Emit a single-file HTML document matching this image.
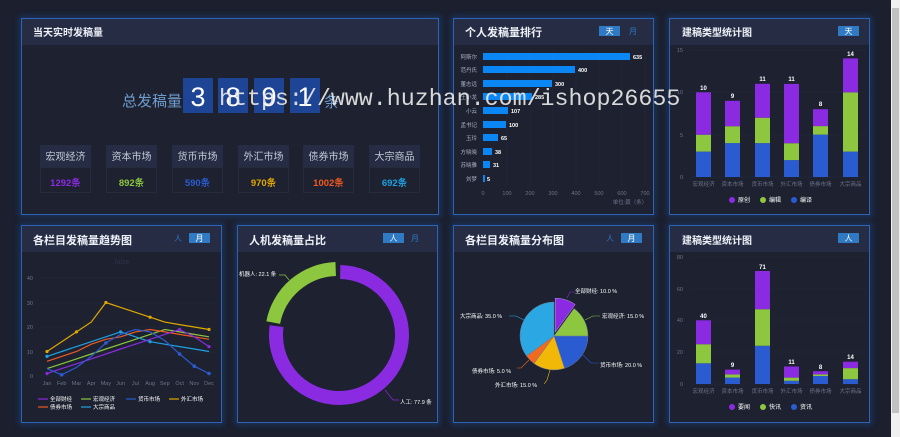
<!DOCTYPE html>
<html><head><meta charset="utf-8"><style>
html,body{margin:0;padding:0;background:#1b1f2e;width:900px;height:437px;overflow:hidden}
svg{display:block}
text{font-family:"Liberation Sans","Noto Sans CJK SC",sans-serif}
</style></head><body>
<svg width="900" height="437" viewBox="0 0 900 437" xmlns="http://www.w3.org/2000/svg">
<defs><filter id="g" x="-10%" y="-10%" width="120%" height="120%"><feGaussianBlur stdDeviation="3"/></filter></defs>
<rect width="900" height="437" fill="#1b1f2e"/>
<rect x="891" y="0" width="9" height="437" fill="#f0f0f0"/>
<rect x="892" y="8" width="7" height="405" fill="#c1c1c1"/>
<g fill="none" stroke="#1f4f9a" stroke-width="4" opacity="0.5" filter="url(#g)">
<rect x="21" y="18" width="418" height="197"/><rect x="453" y="18" width="201" height="197"/><rect x="669" y="18" width="201" height="197"/>
<rect x="21" y="225" width="201" height="198"/><rect x="237" y="225" width="201" height="198"/><rect x="453" y="225" width="201" height="198"/><rect x="669" y="225" width="201" height="198"/>
</g>
<g fill="#1d2130">
<rect x="21" y="18" width="418" height="197"/><rect x="453" y="18" width="201" height="197"/><rect x="669" y="18" width="201" height="197"/>
<rect x="21" y="225" width="201" height="198"/><rect x="237" y="225" width="201" height="198"/><rect x="453" y="225" width="201" height="198"/><rect x="669" y="225" width="201" height="198"/>
</g>
<g fill="#252c44">
<rect x="21" y="18" width="418" height="27"/><rect x="453" y="18" width="201" height="27"/><rect x="669" y="18" width="201" height="27"/>
<rect x="21" y="225" width="201" height="27"/><rect x="237" y="225" width="201" height="27"/><rect x="453" y="225" width="201" height="27"/><rect x="669" y="225" width="201" height="27"/>
</g>
<g fill="none" stroke="#2c63b8" stroke-width="1">
<rect x="21.5" y="18.5" width="417" height="196"/><rect x="453.5" y="18.5" width="200" height="196"/><rect x="669.5" y="18.5" width="200" height="196"/>
<rect x="21.5" y="225.5" width="200" height="197"/><rect x="237.5" y="225.5" width="200" height="197"/><rect x="453.5" y="225.5" width="200" height="197"/><rect x="669.5" y="225.5" width="200" height="197"/>
</g>
<g fill="#eef1f7" font-weight="bold">
<text x="33" y="36" font-size="10">当天实时发稿量</text>
<text x="465" y="36" font-size="11">个人发稿量排行</text>
<text x="682" y="36" font-size="10">建稿类型统计图</text>
<text x="33" y="244" font-size="11">各栏目发稿量趋势图</text>
<text x="249" y="244" font-size="11">人机发稿量占比</text>
<text x="465" y="244" font-size="11">各栏目发稿量分布图</text>
<text x="682" y="244" font-size="10">建稿类型统计图</text>
</g>
<g fill="#2f7ac2"><rect x="599" y="26" width="21" height="10"/><rect x="838" y="26" width="21" height="10"/><rect x="189" y="233" width="21" height="10"/><rect x="383" y="233" width="21" height="10"/><rect x="621" y="233" width="21" height="10"/><rect x="838" y="233" width="21" height="10"/></g>
<g font-size="8" fill="#fff" text-anchor="middle">
<text x="609.5" y="34">天</text><text x="848.5" y="34">天</text><text x="199.5" y="241">月</text><text x="393.5" y="241">人</text><text x="631.5" y="241">月</text><text x="848.5" y="241">人</text>
</g>
<g font-size="8" fill="#2f7ac2" text-anchor="middle"><text x="633" y="34">月</text><text x="178" y="241">人</text><text x="415" y="241">月</text><text x="610" y="241">人</text></g>

<text x="122" y="106" font-size="15" fill="#6f9ccc">总发稿量</text>
<g fill="#1e4496"><rect x="183" y="78" width="30" height="35"/><rect x="218" y="78" width="30" height="35"/><rect x="254" y="78" width="30" height="35"/><rect x="290" y="78" width="30" height="35"/></g>
<g fill="#fff" font-size="27" text-anchor="middle"><text x="198" y="106">3</text><text x="233" y="106">8</text><text x="269" y="106">9</text><text x="305" y="106">1</text></g>
<text x="324" y="107" font-size="15" fill="#6f9ccc">条</text>
<g>
<rect x="40" y="145" width="51" height="22" fill="#252c44"/><rect x="40.5" y="167.5" width="50" height="25" fill="#1d2130" stroke="#262c3e"/>
<rect x="106" y="145" width="51" height="22" fill="#252c44"/><rect x="106.5" y="167.5" width="50" height="25" fill="#1d2130" stroke="#262c3e"/>
<rect x="172" y="145" width="51" height="22" fill="#252c44"/><rect x="172.5" y="167.5" width="50" height="25" fill="#1d2130" stroke="#262c3e"/>
<rect x="238" y="145" width="51" height="22" fill="#252c44"/><rect x="238.5" y="167.5" width="50" height="25" fill="#1d2130" stroke="#262c3e"/>
<rect x="303" y="145" width="51" height="22" fill="#252c44"/><rect x="303.5" y="167.5" width="50" height="25" fill="#1d2130" stroke="#262c3e"/>
<rect x="369" y="145" width="51" height="22" fill="#252c44"/><rect x="369.5" y="167.5" width="50" height="25" fill="#1d2130" stroke="#262c3e"/>
</g>
<g font-size="10" fill="#c3cad8" text-anchor="middle"><text x="65.5" y="160">宏观经济</text><text x="131.5" y="160">资本市场</text><text x="197.5" y="160">货币市场</text><text x="263.5" y="160">外汇市场</text><text x="328.5" y="160">债券市场</text><text x="394.5" y="160">大宗商品</text></g>
<g font-size="9.5" font-weight="bold" text-anchor="middle">
<text x="65.5" y="186" fill="#8a2be2">1292条</text><text x="131.5" y="186" fill="#8dc63f">892条</text><text x="197.5" y="186" fill="#2b5bd0">590条</text><text x="263.5" y="186" fill="#e0a800">970条</text><text x="328.5" y="186" fill="#f05a22">1002条</text><text x="394.5" y="186" fill="#1fa0e0">692条</text>
</g>

<g stroke="#262c3e" stroke-width="0.6"><line x1="507" y1="50" x2="507" y2="185"/><line x1="530" y1="50" x2="530" y2="185"/><line x1="553" y1="50" x2="553" y2="185"/><line x1="576" y1="50" x2="576" y2="185"/><line x1="599" y1="50" x2="599" y2="185"/><line x1="622" y1="50" x2="622" y2="185"/><line x1="645" y1="50" x2="645" y2="185"/></g>
<g fill="#0a86f5">
<rect x="483" y="53" width="147" height="7"/><rect x="483" y="66" width="92" height="7"/><rect x="483" y="80" width="69" height="7"/><rect x="483" y="93" width="49" height="7"/><rect x="483" y="107" width="25" height="7"/><rect x="483" y="121" width="23" height="7"/><rect x="483" y="134" width="15" height="7"/><rect x="483" y="148" width="9" height="7"/><rect x="483" y="161" width="7" height="7"/><rect x="483" y="175" width="2" height="7"/>
</g>
<g font-size="5.5" fill="#aab3c5" text-anchor="end"><text x="477" y="59">阿斯尔</text><text x="477" y="72">范丹氏</text><text x="477" y="86">董志远</text><text x="477" y="99">王小龙</text><text x="477" y="113">小云</text><text x="477" y="127">孟书记</text><text x="477" y="140">玉玲</text><text x="477" y="154">方晓晓</text><text x="477" y="167">苏晓雅</text><text x="477" y="181">刘梦</text></g>
<g font-size="5.5" fill="#fff" font-weight="bold"><text x="633" y="59">635</text><text x="578" y="72">400</text><text x="555" y="86">300</text><text x="535" y="99">285</text><text x="511" y="113">107</text><text x="509" y="127">100</text><text x="501" y="140">65</text><text x="495" y="154">38</text><text x="493" y="167">31</text><text x="487" y="181">5</text></g>
<g font-size="5.5" fill="#6c7488" text-anchor="middle"><text x="483" y="195">0</text><text x="507" y="195">100</text><text x="530" y="195">200</text><text x="553" y="195">300</text><text x="576" y="195">400</text><text x="599" y="195">500</text><text x="622" y="195">600</text><text x="645" y="195">700</text></g>
<text x="630" y="204" font-size="5.5" fill="#6c7488" text-anchor="middle">单位:篇（条）</text>

<g stroke="#262c3e" stroke-width="0.6"><line x1="690" y1="177" x2="866" y2="177"/><line x1="690" y1="135" x2="866" y2="135"/><line x1="690" y1="92" x2="866" y2="92"/><line x1="690" y1="50" x2="866" y2="50"/></g>
<g font-size="5.5" fill="#6c7488" text-anchor="end"><text x="683" y="179">0</text><text x="683" y="137">5</text><text x="683" y="94">10</text><text x="683" y="52">15</text></g>
<g fill="#2b5bd0"><rect x="696" y="151.6" width="15" height="25.4"/><rect x="725" y="143.1" width="15" height="33.9"/><rect x="755" y="143.1" width="15" height="33.9"/><rect x="784" y="160.1" width="15" height="16.9"/><rect x="813" y="134.6" width="15" height="42.4"/><rect x="843" y="151.6" width="15" height="25.4"/></g>
<g fill="#8dc63f"><rect x="696" y="134.7" width="15" height="16.9"/><rect x="725" y="126.2" width="15" height="16.9"/><rect x="755" y="117.7" width="15" height="25.4"/><rect x="784" y="143.2" width="15" height="16.9"/><rect x="813" y="126.1" width="15" height="8.5"/><rect x="843" y="92.3" width="15" height="59.3"/></g>
<g fill="#8a2be2"><rect x="696" y="92.3" width="15" height="42.4"/><rect x="725" y="100.8" width="15" height="25.4"/><rect x="755" y="83.8" width="15" height="33.9"/><rect x="784" y="83.9" width="15" height="59.3"/><rect x="813" y="109.2" width="15" height="16.9"/><rect x="843" y="58.4" width="15" height="33.9"/></g>
<g font-size="6" fill="#fff" font-weight="bold" text-anchor="middle"><text x="703.5" y="90">10</text><text x="732.5" y="98">9</text><text x="762.5" y="81">11</text><text x="791.5" y="81">11</text><text x="820.5" y="106">8</text><text x="850.5" y="56">14</text></g>
<g font-size="5.5" fill="#6c7488" text-anchor="middle"><text x="703.5" y="186">宏观经济</text><text x="732.5" y="186">资本市场</text><text x="762.5" y="186">货币市场</text><text x="791.5" y="186">外汇市场</text><text x="820.5" y="186">债券市场</text><text x="850.5" y="186">大宗商品</text></g>
<circle cx="732" cy="200" r="3" fill="#8a2be2"/><circle cx="763" cy="200" r="3" fill="#8dc63f"/><circle cx="794" cy="200" r="3" fill="#2b5bd0"/>
<g font-size="6" fill="#fff"><text x="738" y="202">原创</text><text x="769" y="202">编辑</text><text x="800" y="202">编译</text></g>

<text x="122" y="264" font-size="7" fill="#2e3446" text-anchor="middle">false</text>
<g stroke="#262c3e" stroke-width="0.6"><line x1="40" y1="376" x2="216" y2="376"/><line x1="40" y1="352" x2="216" y2="352"/><line x1="40" y1="327" x2="216" y2="327"/><line x1="40" y1="303" x2="216" y2="303"/><line x1="40" y1="278" x2="216" y2="278"/></g>
<g font-size="5.5" fill="#6c7488" text-anchor="end"><text x="33" y="378">0</text><text x="33" y="354">10</text><text x="33" y="329">20</text><text x="33" y="305">30</text><text x="33" y="280">40</text></g>
<g font-size="5.5" fill="#6c7488" text-anchor="middle"><text x="47" y="385">Jan</text><text x="61.7" y="385">Feb</text><text x="76.5" y="385">Mar</text><text x="91.2" y="385">Apr</text><text x="105.9" y="385">May</text><text x="120.6" y="385">Jun</text><text x="135.4" y="385">Jul</text><text x="150.1" y="385">Aug</text><text x="164.8" y="385">Sep</text><text x="179.6" y="385">Oct</text><text x="194.3" y="385">Nov</text><text x="209" y="385">Dec</text></g>
<g fill="none" stroke-width="1.2">
<polyline stroke="#e0a800" points="47,351.5 61.7,341.7 76.5,331.9 91.2,322.1 105.9,302.5 120.6,307.4 135.4,312.3 150.1,317.2 164.8,322.1 179.6,324.6 194.3,327 209,329.5"/>
<polyline stroke="#8dc63f" points="47,368.6 61.7,363.8 76.5,358.9 91.2,354 105.9,349 120.6,344.2 135.4,339.3 150.1,334.4 164.8,329.5 179.6,331.9 194.3,334.4 209,336.8"/>
<polyline stroke="#f05a22" points="47,361.3 61.7,356.4 76.5,351.5 91.2,344.2 105.9,339.3 120.6,336.8 135.4,331.9 150.1,329.5 164.8,331.9 179.6,334.4 194.3,336.8 209,339.3"/>
<polyline stroke="#1fa0e0" points="47,356.4 61.7,351.5 76.5,346.6 91.2,341.7 105.9,336.8 120.6,331.9 135.4,336.8 150.1,341.7 164.8,344.2 179.6,346.6 194.3,349 209,351.5"/>
<polyline stroke="#8a2be2" points="47,373.5 61.7,368.6 76.5,363.8 91.2,358.9 105.9,354 120.6,349 135.4,344.2 150.1,339.3 164.8,334.4 179.6,329.5 194.3,336.8 209,346.6"/>
<polyline stroke="#2b5bd0" points="47,368.6 61.7,374.8 76.5,367.4 91.2,356.4 105.9,342.9 120.6,334.4 135.4,329.5 150.1,331.9 164.8,340.5 179.6,354 194.3,366.2 209,373.5"/>
</g>
<g fill="#e0a800"><circle cx="47" cy="351.5" r="1.6"/><circle cx="105.9" cy="302.5" r="1.6"/><circle cx="209" cy="329.5" r="1.6"/><circle cx="76.5" cy="331.9" r="1.6"/><circle cx="150.1" cy="317.2" r="1.6"/></g>
<g fill="#2b5bd0"><circle cx="61.7" cy="374.8" r="1.8"/><circle cx="105.9" cy="342.9" r="1.8"/><circle cx="179.6" cy="354" r="1.8"/><circle cx="209" cy="373.5" r="1.8"/><circle cx="194.3" cy="366.2" r="1.8"/></g>
<g fill="#1fa0e0"><circle cx="120.6" cy="331.9" r="1.6"/><circle cx="150.1" cy="341.7" r="1.6"/><circle cx="47" cy="356.4" r="1.6"/></g>
<g fill="#8a2be2"><circle cx="47" cy="373.5" r="1.6"/><circle cx="179.6" cy="329.5" r="1.6"/><circle cx="209" cy="346.6" r="1.6"/></g>
<g stroke-width="1.2"><line x1="38" y1="399" x2="48" y2="399" stroke="#8a2be2"/><line x1="81" y1="399" x2="91" y2="399" stroke="#8dc63f"/><line x1="126" y1="399" x2="136" y2="399" stroke="#2b5bd0"/><line x1="169" y1="399" x2="179" y2="399" stroke="#e0a800"/><line x1="38" y1="407" x2="48" y2="407" stroke="#f05a22"/><line x1="81" y1="407" x2="91" y2="407" stroke="#1fa0e0"/></g>
<g font-size="5.5" fill="#fff"><text x="50" y="401">全部财经</text><text x="93" y="401">宏观经济</text><text x="138" y="401">货币市场</text><text x="181" y="401">外汇市场</text><text x="50" y="409">债券市场</text><text x="93" y="409">大宗商品</text></g>

<!-- donut -->
<path d="M340.2,272 A63,63 0 1 1 276.6,326.2" fill="none" stroke="#8a2be2" stroke-width="14"/>
<path d="M273.2,322.6 A66,66 0 0 1 335.7,269" fill="none" stroke="#8dc63f" stroke-width="14"/>
<path d="M279,275 l6,0 l4,5" fill="none" stroke="#8dc63f" stroke-width="0.7"/>
<path d="M385,390 l8,10 l6,0" fill="none" stroke="#8a2be2" stroke-width="0.7"/>
<g font-size="5.5" fill="#fff"><text x="239" y="276">机器人: 22.1 条</text><text x="400" y="404">人工: 77.9 条</text></g>

<path d="M554,336 L588,336 A34,34 0 0 1 564.5,368.3 Z" fill="#2b5bd0" stroke="#6b7894" stroke-width="0.5"/>
<path d="M554,336 L574,308.5 A34,34 0 0 1 588,336 Z" fill="#8dc63f" stroke="#6b7894" stroke-width="0.5"/>
<path d="M554,336 L564.5,368.3 A34,34 0 0 1 534,363.5 Z" fill="#f2b807" stroke="#6b7894" stroke-width="0.5"/>
<path d="M554,336 L534,363.5 A34,34 0 0 1 526.5,356 Z" fill="#f26a22" stroke="#6b7894" stroke-width="0.5"/>
<path d="M554,336 L526.5,356 A34,34 0 0 1 554,302 Z" fill="#2ba8e3" stroke="#6b7894" stroke-width="0.5"/>
<path d="M555.2,332.2 L555.2,298.2 A34,34 0 0 1 575.2,304.5 Z" fill="#8a2be2" stroke="#b59ce0" stroke-width="0.5"/>
<g fill="none" stroke-width="0.6"><path d="M567,298 l3,-6 l5,0" stroke="#8a2be2"/><path d="M585,320 l8,-4 l7,0" stroke="#8dc63f"/><path d="M583,355 l8,8 l8,0" stroke="#2b5bd0"/><path d="M550,370 l-3,10 l-3,4" stroke="#f2b807"/><path d="M529,360 l-8,8 l-4,0" stroke="#f26a22"/><path d="M524,320 l-8,-4 l-7,0" stroke="#2ba8e3"/></g>
<g font-size="5.5" fill="#fff"><text x="575" y="293">全部财经: 10.0 %</text><text x="602" y="318">宏观经济: 15.0 %</text><text x="600" y="367">货币市场: 20.0 %</text><text x="495" y="387">外汇市场: 15.0 %</text><text x="472" y="373">债券市场: 5.0 %</text><text x="460" y="318">大宗商品: 35.0 %</text></g>

<g stroke="#262c3e" stroke-width="0.6"><line x1="690" y1="384" x2="866" y2="384"/><line x1="690" y1="352" x2="866" y2="352"/><line x1="690" y1="320" x2="866" y2="320"/><line x1="690" y1="289" x2="866" y2="289"/><line x1="690" y1="257" x2="866" y2="257"/></g>
<g font-size="5.5" fill="#6c7488" text-anchor="end"><text x="683" y="386">0</text><text x="683" y="354">20</text><text x="683" y="322">40</text><text x="683" y="291">60</text><text x="683" y="259">80</text></g>
<g fill="#2b5bd0"><rect x="696" y="363.3" width="15" height="20.7"/><rect x="725" y="377.6" width="15" height="6.4"/><rect x="755" y="345.8" width="15" height="38.2"/><rect x="784" y="380.8" width="15" height="3.2"/><rect x="813" y="376" width="15" height="8"/><rect x="843" y="379.2" width="15" height="4.8"/></g>
<g fill="#8dc63f"><rect x="696" y="344.2" width="15" height="19.1"/><rect x="725" y="374.4" width="15" height="3.2"/><rect x="755" y="309.2" width="15" height="36.6"/><rect x="784" y="377.6" width="15" height="3.2"/><rect x="813" y="374.4" width="15" height="1.6"/><rect x="843" y="368.1" width="15" height="11.1"/></g>
<g fill="#8a2be2"><rect x="696" y="320.3" width="15" height="23.9"/><rect x="725" y="369.6" width="15" height="4.8"/><rect x="755" y="271" width="15" height="38.2"/><rect x="784" y="366.5" width="15" height="11.1"/><rect x="813" y="371.2" width="15" height="3.2"/><rect x="843" y="361.7" width="15" height="6.4"/></g>
<g font-size="6" fill="#fff" font-weight="bold" text-anchor="middle"><text x="703.5" y="318">40</text><text x="732.5" y="367">9</text><text x="762.5" y="269">71</text><text x="791.5" y="364">11</text><text x="820.5" y="369">8</text><text x="850.5" y="359">14</text></g>
<g font-size="5.5" fill="#6c7488" text-anchor="middle"><text x="703.5" y="393">宏观经济</text><text x="732.5" y="393">资本市场</text><text x="762.5" y="393">货币市场</text><text x="791.5" y="393">外汇市场</text><text x="820.5" y="393">债券市场</text><text x="850.5" y="393">大宗商品</text></g>
<circle cx="732" cy="407" r="3" fill="#8a2be2"/><circle cx="763" cy="407" r="3" fill="#8dc63f"/><circle cx="794" cy="407" r="3" fill="#2b5bd0"/>
<g font-size="6" fill="#fff"><text x="738" y="409">要闻</text><text x="769" y="409">快讯</text><text x="800" y="409">资讯</text></g>

<text x="219" y="105" font-size="23.3" fill="#e8e8e8" opacity="0.92" style="font-family:'Liberation Mono',monospace">https://www.huzhan.com/ishop26655</text>
</svg>
</body></html>
